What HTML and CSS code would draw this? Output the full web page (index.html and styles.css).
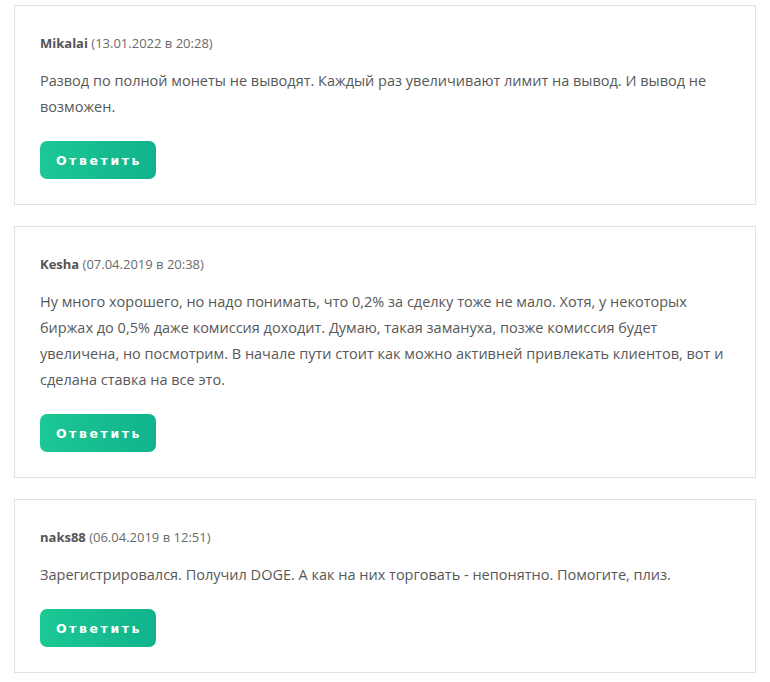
FILE: index.html
```html
<!DOCTYPE html>
<html lang="ru">
<head>
<meta charset="utf-8">
<link rel="stylesheet" href="styles.css">
</head>
<body>
<div class="list">
  <div class="comment">
    <div class="meta"><b class="author">Mikalai</b> (13.01.2022 в 20:28)</div>
    <p class="text">Развод по полной монеты не выводят. Каждый раз увеличивают лимит на вывод. И вывод не возможен.</p>
    <button class="reply">Ответить</button>
  </div>
  <div class="comment">
    <div class="meta"><b class="author">Kesha</b> (07.04.2019 в 20:38)</div>
    <p class="text">Ну много хорошего, но надо понимать, что 0,2% за сделку тоже не мало. Хотя, у некоторых биржах до 0,5% даже комиссия доходит. Думаю, такая замануха, позже комиссия будет увеличена, но посмотрим. В начале пути стоит как можно активней привлекать клиентов, вот и сделана ставка на все это.</p>
    <button class="reply">Ответить</button>
  </div>
  <div class="comment">
    <div class="meta"><b class="author">naks88</b> (06.04.2019 в 12:51)</div>
    <p class="text">Зарегистрировался. Получил DOGE. А как на них торговать - непонятно. Помогите, плиз.</p>
    <button class="reply">Ответить</button>
  </div>
</div>
</body>
</html>
```
FILE: styles.css
```css
html, body {
  margin: 0;
  background: #ffffff;
}
body {
  padding: 5px 14px 0 14px;
  font-family: "Open Sans", "Liberation Sans", sans-serif;
  color: #555555;
}
.list {
  display: flex;
  flex-direction: column;
  gap: 21px;
}
.comment {
  border: 1px solid #e2e2e2;
  padding: 27px 25px 25px 25px;
  display: flex;
  flex-direction: column;
  align-items: flex-start;
}
.meta {
  font-size: 13px;
  line-height: 20px;
  color: #6b6b6b;
}
.author {
  font-weight: 700;
  color: #555555;
}
.text {
  margin: 15px 0 21px 0;
  font-size: 14.5px;
  line-height: 26px;
  color: #585858;
  max-width: 694px;
}
.reply {
  width: 116px;
  height: 38px;
  border: none;
  border-radius: 7px;
  background: linear-gradient(90deg, #1cc894 0%, #11b38c 100%);
  color: #ffffff;
  font-family: "DejaVu Sans", sans-serif;
  font-weight: 700;
  font-size: 12.5px;
  letter-spacing: 2.6px;
  padding: 0 0 0 2px;
}
```
